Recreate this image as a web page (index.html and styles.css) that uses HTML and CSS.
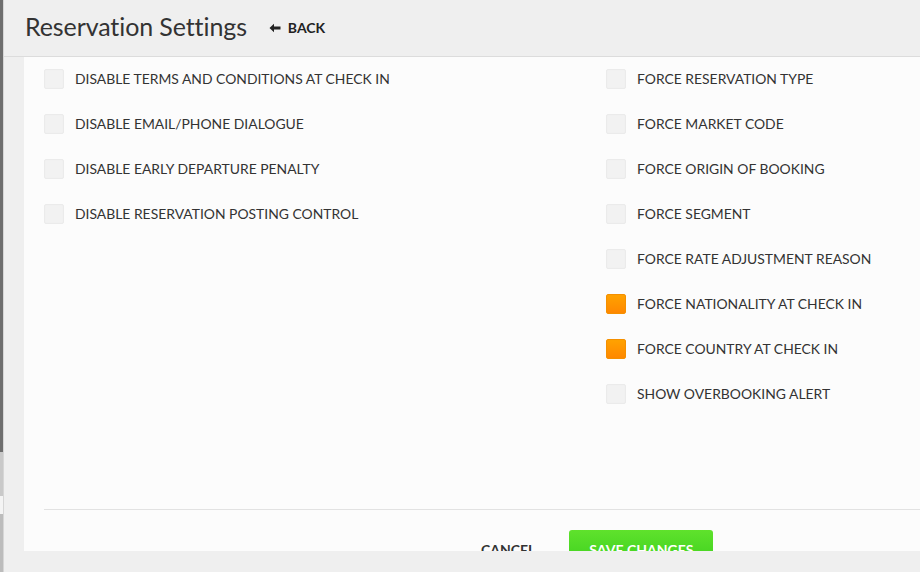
FILE: index.html
```html
<!DOCTYPE html>
<html>
<head>
<meta charset="utf-8">
<link rel="stylesheet" href="styles.css">
</head>
<body>
<div class="app">
  <div class="edge"></div>
  <main class="main">
    <header class="header">
      <h1 class="title">Reservation Settings</h1>
      <a class="back"><span class="arrow">
        <svg width="12" height="10" viewBox="0 0 12 10"><path d="M0.5 5 L5 0.8 L5 3.6 L11.5 3.6 L11.5 6.4 L5 6.4 L5 9.2 Z" fill="#222"/></svg>
      </span>BACK</a>
    </header>
    <section class="panel">
      <div class="settings">
        <div class="col">
          <label class="opt"><span class="box"></span>DISABLE TERMS AND CONDITIONS AT CHECK IN</label>
          <label class="opt"><span class="box"></span>DISABLE EMAIL/PHONE DIALOGUE</label>
          <label class="opt"><span class="box"></span>DISABLE EARLY DEPARTURE PENALTY</label>
          <label class="opt"><span class="box"></span>DISABLE RESERVATION POSTING CONTROL</label>
        </div>
        <div class="col">
          <label class="opt"><span class="box"></span>FORCE RESERVATION TYPE</label>
          <label class="opt"><span class="box"></span>FORCE MARKET CODE</label>
          <label class="opt"><span class="box"></span>FORCE ORIGIN OF BOOKING</label>
          <label class="opt"><span class="box"></span>FORCE SEGMENT</label>
          <label class="opt"><span class="box"></span>FORCE RATE ADJUSTMENT REASON</label>
          <label class="opt"><span class="box checked"></span>FORCE NATIONALITY AT CHECK IN</label>
          <label class="opt"><span class="box checked"></span>FORCE COUNTRY AT CHECK IN</label>
          <label class="opt"><span class="box"></span>SHOW OVERBOOKING ALERT</label>
        </div>
      </div>
      <div class="footer">
        <button class="btn cancel">CANCEL</button>
        <button class="btn save">SAVE CHANGES</button>
      </div>
    </section>
  </main>
</div>
</body>
</html>
```
FILE: styles.css
```css
html, body {
  margin: 0;
  padding: 0;
}
body {
  width: 920px;
  height: 572px;
  overflow: hidden;
  background: #efefef;
  font-family: "Source Sans Pro", Lato, "Liberation Sans", sans-serif;
  color: #333;
}
.app {
  display: flex;
  height: 572px;
}
.edge {
  width: 4px;
  flex: none;
  background: linear-gradient(to bottom, #6e6e6e 0, #6e6e6e 452px, #c9c9c9 452px, #c9c9c9 496px, #f4f4f4 496px, #f4f4f4 514px, #bcbcbc 514px);
  border-right: 1px solid #d6d6d6;
  box-sizing: border-box;
}
.main {
  flex: 1;
  display: flex;
  flex-direction: column;
  min-width: 0;
}
.header {
  height: 56px;
  border-bottom: 1px solid #dcdcdc;
  display: flex;
  align-items: center;
  padding-left: 21px;
}
.title {
  margin: 0 0 4px;
  font-weight: 400;
  font-size: 25px;
  color: #333;
  letter-spacing: -0.1px;
}
.back {
  margin-left: 22px;
  display: flex;
  align-items: center;
  font-weight: 700;
  font-size: 14px;
  color: #222;
  margin-bottom: 1px;
}
.arrow {
  display: flex;
  margin-right: 7px;
}
.panel {
  margin-left: 20px;
  height: 494px;
  background: #fcfcfc;
  overflow: hidden;
  display: flex;
  flex-direction: column;
}
.settings {
  display: grid;
  grid-template-columns: 562px 1fr;
  padding: 11px 20px 0;
  height: 452px;
  flex: none;
  box-sizing: border-box;
}
.col {
  display: flex;
  flex-direction: column;
  gap: 25px;
}
.opt {
  display: flex;
  align-items: center;
  height: 20px;
  font-size: 13.9px;
  color: #333;
  white-space: nowrap;
}
.box {
  width: 20px;
  height: 20px;
  box-sizing: border-box;
  border-radius: 2px;
  background: #f2f2f2;
  border: 1px solid #ebebeb;
  box-shadow: inset 0 0 1px rgba(0,0,0,0.04);
  margin-right: 11px;
  flex: none;
  margin-top: 1px;
}
.box.checked {
  background: linear-gradient(to bottom, #ffa200, #ff8800);
  border-color: #f59000;
}
.footer {
  margin-left: 20px;
  border-top: 1px solid #e2e2e2;
  padding-top: 20px;
  display: flex;
  align-items: flex-start;
  padding-left: 417px;
  gap: 14px;
  flex: none;
}
.btn {
  font-family: inherit;
  font-weight: 700;
  font-size: 14px;
  border: none;
  height: 36px;
  padding: 0 20px;
  border-radius: 3px;
  white-space: nowrap;
  cursor: pointer;
}
.cancel {
  background: transparent;
  color: #333;
  padding-top: 2px;
}
.save {
  width: 144px;
  padding: 2px 0 0;
  background: linear-gradient(to bottom, #5fe22c, #3ccf1e);
  color: #fff;
}
```
